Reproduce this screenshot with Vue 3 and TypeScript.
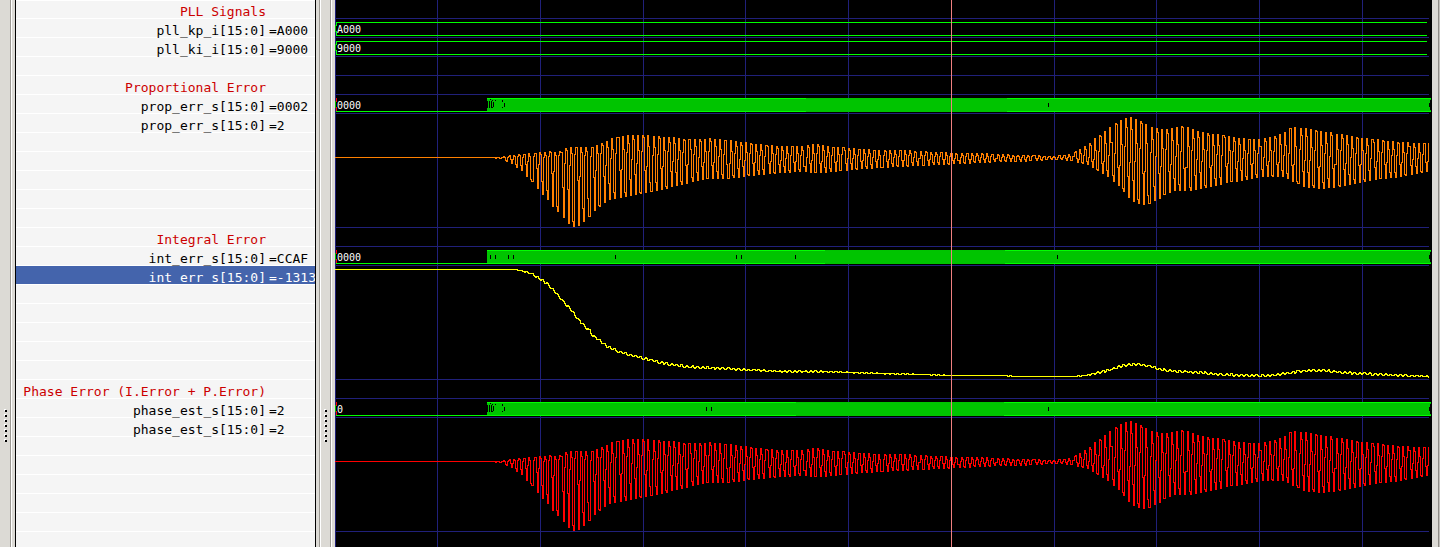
<script setup lang="ts">
interface Row {
  name?: string
  value?: string
  kind?: 'heading' | 'selected'
}
type Point = [x: number, y: number]
type Band = [x: number, top: number, bottom: number]

const ROW_COUNT = 29
const labelled: Record<number, Row> = {
  0: { name: 'PLL Signals', kind: 'heading' },
  1: { name: 'pll_kp_i[15:0]', value: '=A000' },
  2: { name: 'pll_ki_i[15:0]', value: '=9000' },
  4: { name: 'Proportional Error', kind: 'heading' },
  5: { name: 'prop_err_s[15:0]', value: '=0002' },
  6: { name: 'prop_err_s[15:0]', value: '=2' },
  12: { name: 'Integral Error', kind: 'heading' },
  13: { name: 'int_err_s[15:0]', value: '=CCAF' },
  14: { name: 'int_err_s[15:0]', value: '=-1313', kind: 'selected' },
  20: { name: 'Phase Error (I.Error + P.Error)', kind: 'heading' },
  21: { name: 'phase_est_s[15:0]', value: '=2' },
  22: { name: 'phase_est_s[15:0]', value: '=2' },
}
const rows: Row[] = Array.from({ length: ROW_COUNT }, (_, i) => labelled[i] ?? {})

const busLabels: Record<number, string> = { 1: 'A000', 2: '9000', 5: '0000', 13: '0000', 21: '0' }
const plotRows = Array.from({ length: ROW_COUNT }, (_, i) => busLabels[i] ?? '')

// Time axis: the plot spans 335..1432
const ORIGIN = 335
const END = 1428
const gridX = [335, 437, 540, 643, 745, 848, 1054, 1156, 1259, 1362]
const gridY = [18, 37, 56, 75, 94, 113, 227, 246, 265, 379, 398, 417, 531]

// Oscillation extents of the proportional error over time
const band: Band[] = [
  [335, 157, 157], [487, 157, 157], [495, 157, 158], [500, 156, 158], [505, 156, 160], [511, 155, 163],
  [518, 154, 168], [523, 154, 172], [528, 153, 178], [533, 153, 183], [538, 152, 189], [543, 152, 195],
  [548, 151, 200], [553, 152, 207], [558, 151, 212], [564, 148, 218], [570, 147, 225], [574, 147, 226],
  [579, 147, 225], [585, 147, 219], [590, 147, 214], [596, 145, 208], [601, 143, 204], [606, 141, 200],
  [611, 138, 198], [621, 136, 197], [630, 135, 195], [642, 135, 193], [655, 136, 190], [665, 137, 188],
  [675, 137, 185], [684, 139, 183], [700, 139, 179], [708, 138, 178], [720, 139, 178], [735, 141, 177],
  [750, 143, 175], [765, 145, 174], [780, 146, 172], [800, 146, 171], [812, 144, 172], [823, 145, 172],
  [835, 147, 171], [850, 148, 169], [865, 149, 168], [880, 150, 167], [900, 150, 166], [920, 151, 165],
  [940, 152, 164], [960, 153, 163], [980, 153, 162], [1000, 154, 161], [1018, 155, 161], [1035, 155, 160],
  [1050, 156, 159], [1060, 155, 159], [1070, 154, 160], [1075, 151, 161], [1080, 148, 163], [1085, 145, 163],
  [1090, 142, 166], [1095, 137, 169], [1100, 134, 172], [1105, 130, 175], [1110, 126, 178], [1115, 123, 183],
  [1120, 120, 187], [1125, 118, 193], [1130, 117, 199], [1136, 119, 202], [1141, 122, 205], [1148, 126, 203],
  [1153, 127, 201], [1160, 129, 197], [1167, 129, 192], [1175, 127, 190], [1182, 126, 190], [1190, 128, 190],
  [1197, 131, 189], [1207, 133, 186], [1216, 134, 185], [1227, 136, 182], [1240, 138, 180], [1250, 139, 178],
  [1260, 139, 176], [1270, 137, 176], [1280, 134, 176], [1285, 131, 177], [1290, 127, 180], [1295, 127, 182],
  [1303, 128, 186], [1313, 130, 187], [1322, 131, 188], [1333, 133, 187], [1345, 135, 185], [1360, 138, 182],
  [1375, 139, 179], [1390, 141, 177], [1400, 142, 176], [1415, 143, 173], [1428, 143, 171],
]

const integral: Point[] = [
  [335, 269], [513, 269], [520, 270], [527, 272], [533, 275], [540, 279], [547, 284], [553, 290], [558, 296],
  [564, 303], [570, 309], [575, 316], [581, 323], [587, 329], [592, 335], [600, 341], [608, 347], [618, 351],
  [628, 354], [640, 357], [655, 361], [670, 364], [685, 366], [700, 367], [720, 368], [740, 369], [760, 370],
  [780, 371], [820, 371], [850, 372], [880, 373], [920, 374], [951, 375], [1000, 375], [1020, 376],
  [1072, 376], [1085, 375], [1098, 372], [1110, 369], [1122, 365], [1130, 364], [1140, 364], [1150, 366],
  [1160, 369], [1175, 371], [1200, 372], [1220, 374], [1245, 375], [1270, 375], [1285, 373], [1297, 371],
  [1312, 370], [1325, 370], [1340, 372], [1360, 373], [1380, 374], [1405, 375], [1428, 376],
]

function interpolate(points: Point[], x: number): number {
  const next = points.findIndex((p) => p[0] > x)
  if (next < 0) return points[points.length - 1][1]
  if (next === 0) return points[0][1]
  const [x0, y0] = points[next - 1]
  const [x1, y1] = points[next]
  return y0 + ((y1 - y0) * (x - x0)) / (x1 - x0)
}

const crests: Point[] = band.map(([x, top]) => [x, top])
const troughs: Point[] = band.map(([x, , bottom]) => [x, bottom])
// Cycle number to time; each cycle is sampled five times
const cycles: Point[] = [[-6, 487], [0, 518], [22, 632], [119, 1130], [177, 1428], [178, 1433]]
const SAMPLES = 5
const BASE = 157

// Sample within a cycle, with a slow phase wander, scaled to reach both extents
function sample(k: number): number {
  const cycle = Math.floor(k / SAMPLES)
  const lag = ((18 + 17 * Math.sin(cycle * 2.4)) * Math.PI) / 180
  const values = Array.from({ length: SAMPLES }, (_, i) => Math.cos((2 * Math.PI * i) / SAMPLES - lag))
  const v = values[k - cycle * SAMPLES]
  return v > 0 ? v / Math.max(...values) : v / -Math.min(...values)
}

function trace(level: (x: number, s: number) => number): string {
  const start = Math.round(level(ORIGIN, 0))
  let d = `M0 ${start + 0.5}`
  for (let k = -6 * SAMPLES; k <= 177 * SAMPLES; k++) {
    const x = Math.round(interpolate(cycles, k / SAMPLES))
    if (x > END) break
    d += `H${x - ORIGIN + 0.5}V${Math.round(level(x, sample(k))) + 0.5}`
  }
  return `${d}H${END - ORIGIN + 1}`
}

function oscillation(offset: number): string {
  return trace((x, s) => {
    const extent = s > 0 ? BASE - interpolate(crests, x) : interpolate(troughs, x) - BASE
    return BASE + offset - s * extent
  })
}

const proportionalPath = oscillation(0)
const phasePath = oscillation(304)
const integralPath = trace((x, s) => {
  const swing = interpolate(troughs, x) - interpolate(crests, x)
  return interpolate(integral, x) + s * Math.min(1, swing / 42)
})

// Buses that change too quickly to label, drawn as solid blocks
const buses = [
  { y: 98, rims: [[487, 806], [1007, 1431]], ticks: [1048], start: true },
  { y: 250, rims: [[487, 825], [1005, 1431]], ticks: [490, 495, 508, 513, 615, 736, 741, 795, 1057], start: false },
  { y: 402, rims: [[487, 796], [1004, 1431]], ticks: [706, 711, 1048], start: true },
]
const startMarks =
  'M152.5 3V10M154.5 3V10M156.5 3V10M157.5 2V3M158.5 4V9M157.5 9V10M155.5 1V2M160.5 2V3M167.5 2V4M169.5 5V9M167.5 9V10'
</script>

<template>
  <main class="viewer">
    <div class="sash" role="separator" aria-orientation="vertical">
      <i v-for="n in 7" :key="n" class="dot"></i>
    </div>
    <div class="frame-edge"></div>

    <ul class="signals">
      <li v-for="(row, i) in rows" :key="i" class="signal" :class="row.kind">
        <span class="name">{{ row.name }}</span>
        <span class="value">{{ row.value }}</span>
      </li>
    </ul>

    <div class="frame-edge closing"></div>
    <div class="sash middle" role="separator" aria-orientation="vertical">
      <i v-for="n in 7" :key="n" class="dot"></i>
    </div>
    <div class="frame-edge"></div>

    <section class="waves" aria-label="Waveforms">
      <svg class="plot" viewBox="0 0 1097 551" preserveAspectRatio="none" shape-rendering="crispEdges" aria-hidden="true">
        <g class="grid">
          <path v-for="x in gridX" :key="x" :d="`M${x - ORIGIN + 0.5} 0V551`" />
          <path v-for="y in gridY" :key="y" :d="`M0 ${y + 0.5}H1094`" />
        </g>

        <g class="bus-line">
          <path v-for="y in [22, 41]" :key="y" :d="`M1092 ${y + 0.5}H1.5V${y + 4}M1.5 ${y + 9}V${y + 13.5}H1092`" />
          <path v-for="y in [22, 41]" :key="-y" class="dim" :d="`M0.5 ${y + 3}V${y + 10}`" />
        </g>

        <g v-for="bus in buses" :key="bus.y" :transform="`translate(0 ${bus.y})`">
          <path class="bus-line" d="M1 13.5H153" />
          <path class="unknown" d="M1.5 0V4M1.5 9V13" />
          <path class="bus-line dim" d="M0.5 3V10" />
          <path class="block" d="M152 0H1096V2H1095V5H1094V9H1095V12H1096V14H152Z" />
          <template v-for="rim in bus.rims" :key="rim[0]">
            <path class="bus-line" :d="`M${rim[0] - ORIGIN} 0.5H${rim[1] - ORIGIN}M${rim[0] - ORIGIN} 13.5H${rim[1] - ORIGIN}`" />
          </template>
          <path v-if="bus.start" class="tick" :d="startMarks" />
          <path v-for="x in bus.ticks" :key="x" class="tick" :d="`M${x - ORIGIN + 0.5} 5V9`" />
        </g>

        <path class="trace proportional" :d="proportionalPath" />
        <path class="trace integral" :d="integralPath" />
        <path class="trace phase" :d="phasePath" />
        <path class="cursor" d="M616.5 0V551" />
      </svg>
      <ul class="labels">
        <li v-for="(label, i) in plotRows" :key="i">{{ label }}</li>
      </ul>
    </section>

    <div class="scroll-edge"></div>
  </main>
</template>

<style scoped>
.viewer {
  display: flex;
  height: 100vh;
  overflow: hidden;
  background: #dcdad5;
}

ul {
  margin: 0;
  padding: 0;
  list-style: none;
}

.sash {
  box-sizing: border-box;
  flex: none;
  display: flex;
  flex-direction: column;
  gap: 3px;
  width: 10px;
  padding: 410px 0 0 5px;
}

.sash.middle {
  width: 9px;
  padding-left: 4px;
}

.dot {
  flex: none;
  width: 2px;
  height: 2px;
  background: #000;
  box-shadow: -1px -1px 0 #fff;
}

.frame-edge {
  box-sizing: border-box;
  flex: none;
  width: 5px;
  border-left: 1px solid #9c9993;
  box-shadow: inset 1px 0 0 #fff;
}

.frame-edge.closing {
  border-left: 0;
  border-right: 1px solid #fff;
  box-shadow: inset -1px 0 0 #9c9993;
}

.signals {
  box-sizing: border-box;
  flex: none;
  width: 301px;
  overflow: hidden;
  background: #f5f5f5;
  border: solid #000;
  border-width: 0 1px;
  box-shadow: inset 0 1px 0 #fff;
  color: #000;
  font: 13px/18px "DejaVu Sans Mono", monospace;
}

.signal {
  display: grid;
  grid-template-columns: 250px 1fr;
  column-gap: 3px;
  height: 18px;
  border-bottom: 1px solid #fff;
  white-space: pre;
}

.name {
  text-align: right;
  padding-top: 3px;
}

.value {
  padding-top: 3px;
}

.heading {
  color: #cc0000;
}

.selected {
  color: #fff;
  background: #4464ac;
  background-clip: padding-box;
}

.waves {
  position: relative;
  flex: 1;
  min-width: 0;
  overflow: hidden;
  background: #000;
}

.plot {
  display: block;
  width: 100%;
  height: 551px;
  fill: none;
}

.grid {
  stroke: #20207a;
}

.bus-line {
  stroke: #00ff00;
}

.dim {
  stroke: #00c400;
}

.unknown {
  stroke: #ff0000;
}

.block {
  fill: #00c400;
}

.tick {
  stroke: #000;
}

.proportional {
  stroke: #ff8000;
}

.integral {
  stroke: #ffff00;
}

.phase {
  stroke: #ff0000;
}

.cursor {
  stroke: #f08080;
}

.labels {
  position: absolute;
  top: 1px;
  left: 2px;
  color: #fff;
  font: 10px/19px "DejaVu Sans Mono", monospace;
}

.labels li {
  height: 19px;
}

.scroll-edge {
  box-sizing: border-box;
  flex: none;
  width: 8px;
  border-right: 1px solid #c4c1bc;
  box-shadow: inset -1px 0 0 #8f8c87;
}
</style>
